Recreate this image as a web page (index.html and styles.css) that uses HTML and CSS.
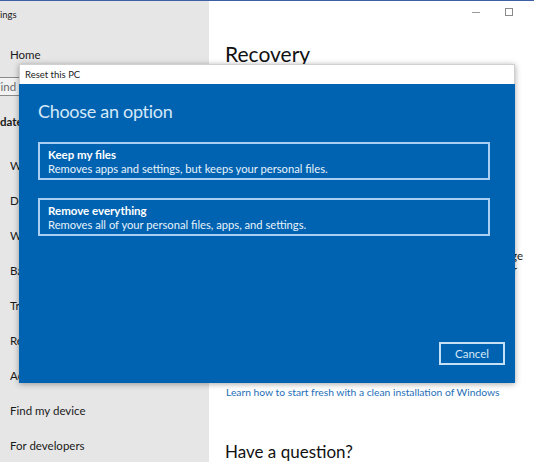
FILE: index.html
```html
<!DOCTYPE html>
<html>
<head>
<meta charset="utf-8">
<link rel="stylesheet" href="styles.css">
</head>
<body>
<div class="window">
  <div class="sidebar">
    <div class="app-title">ings</div>
    <div class="home">Home</div>
    <div class="search">Find a setting</div>
    <div class="section">Update &amp; Security</div>
    <ul class="nav">
      <li>Windows Update</li>
      <li>Delivery Optimization</li>
      <li>Windows Security</li>
      <li>Backup</li>
      <li>Troubleshoot</li>
      <li>Recovery</li>
      <li>Activation</li>
      <li>Find my device</li>
      <li>For developers</li>
    </ul>
  </div>
  <div class="main">
    <div class="caption">
      <span class="cap-min"></span>
      <span class="cap-max"></span>
    </div>
    <h1 class="page-title">Recovery</h1>
    <div class="hidden-text">
      <div class="hl hl1">and reinstall Windows without losing your data. To change</div>
      <div class="hl hl2">this, reset your PC. Any apps or programs that weren't there befor</div>
    </div>
    <a class="link">Learn how to start fresh with a clean installation of Windows</a>
    <h2 class="question">Have a question?</h2>
  </div>
</div>

<div class="dialog">
  <div class="dialog-title">Reset this PC</div>
  <div class="dialog-body">
    <div class="dialog-heading">Choose an option</div>
    <div class="options">
      <div class="option">
        <div class="opt-title">Keep my files</div>
        <div class="opt-desc">Removes apps and settings, but keeps your personal files.</div>
      </div>
      <div class="option">
        <div class="opt-title">Remove everything</div>
        <div class="opt-desc">Removes all of your personal files, apps, and settings.</div>
      </div>
    </div>
    <div class="actions">
      <div class="cancel">Cancel</div>
    </div>
  </div>
</div>
</body>
</html>
```

FILE: styles.css
```css
html, body {
  margin: 0;
  padding: 0;
}
body {
  width: 534px;
  height: 462px;
  overflow: hidden;
  position: relative;
  font-family: "Lato", "Noto Sans", sans-serif;
  color: #1a1a1a;
  background: #ffffff;
}
.window {
  display: flex;
  height: 461px;
  border-top: 1px solid #3c5fa6;
}
.sidebar {
  width: 209px;
  flex: none;
  background: #e6e6e6;
  font-size: 11.5px;
  overflow: hidden;
}
.app-title {
  font-size: 9.5px;
  margin-top: 8px;
  height: 12px;
  line-height: 12px;
}
.home {
  margin-top: 27px;
  padding-left: 10px;
  line-height: 14px;
}
.search {
  margin-top: 15px;
  width: 190px;
  height: 19px;
  box-sizing: border-box;
  border: 1px solid #8a8a8a;
  border-left: none;
  background: #f2f2f2;
  line-height: 17px;
  text-indent: -6px;
  color: #6a6a6a;
  white-space: nowrap;
  overflow: hidden;
}
.section {
  margin-top: 19px;
  font-weight: bold;
  text-indent: -15px;
  line-height: 14px;
  white-space: nowrap;
}
.nav {
  list-style: none;
  margin: 30px 0 0 0;
  padding: 0 0 0 10px;
  display: flex;
  flex-direction: column;
  gap: 21px;
}
.nav li {
  line-height: 14px;
  white-space: nowrap;
}
.main {
  flex: 1;
  position: relative;
  padding-left: 16px;
  display: flex;
  flex-direction: column;
  min-width: 0;
}
.caption {
  display: flex;
  justify-content: flex-end;
  align-items: center;
  gap: 25px;
  height: 24px;
  padding-right: 21px;
}
.cap-min {
  width: 8px;
  height: 1px;
  background: #9a9a9a;
}
.cap-max {
  width: 6px;
  height: 6px;
  border: 1px solid #8a8a8a;
  margin-top: -2px;
}
.page-title {
  margin: 17px 0 0 0;
  font-size: 21px;
  font-weight: normal;
  line-height: 26px;
  color: #111;
}
.hidden-text {
  margin-top: 182px;
  font-size: 11.5px;
  line-height: 14px;
  width: 298px;
}
.hl {
  white-space: nowrap;
  direction: rtl;
  text-align: right;
}
.hl2 { padding-right: 6px; }
.link {
  margin-top: 108px;
  font-size: 10.3px;
  line-height: 14px;
  color: #1e6fb8;
  padding-left: 1px;
  white-space: nowrap;
}
.question {
  margin: 43px 0 0 0;
  font-size: 17px;
  font-weight: normal;
  line-height: 20px;
  color: #111;
  white-space: nowrap;
}
.dialog {
  position: absolute;
  left: 19px;
  top: 64px;
  width: 496px;
  height: 319px;
  display: flex;
  flex-direction: column;
  box-shadow: 0 1px 6px rgba(0,0,0,0.35);
}
.dialog-title {
  height: 20px;
  box-sizing: border-box;
  background: #ffffff;
  border: 1px solid #d0d0d0;
  border-bottom: none;
  font-size: 9.5px;
  line-height: 19px;
  padding-left: 5px;
  color: #222;
}
.dialog-body {
  flex: 1;
  background: #0063b1;
  padding: 14px 10px 18px 19px;
  display: flex;
  flex-direction: column;
}
.dialog-heading {
  font-size: 18px;
  letter-spacing: -0.3px;
  line-height: 26px;
  color: #d6e8f8;
}
.options {
  margin-top: 18px;
  margin-right: 15px;
  display: flex;
  flex-direction: column;
  gap: 18px;
}
.option {
  height: 38px;
  box-sizing: border-box;
  border: 2px solid #a9d0f2;
  padding: 4px 8px 0 8px;
  color: #ffffff;
  font-size: 11.2px;
  line-height: 14px;
}
.opt-title {
  font-weight: bold;
  font-size: 11.5px;
}
.opt-desc {
  color: #e8f2fb;
}
.actions {
  margin-top: auto;
  display: flex;
  justify-content: flex-end;
}
.cancel {
  width: 66px;
  height: 23px;
  box-sizing: border-box;
  border: 2px solid #c6e0f6;
  color: #d6e8f8;
  font-size: 11.5px;
  line-height: 19px;
  text-align: center;
}
```
